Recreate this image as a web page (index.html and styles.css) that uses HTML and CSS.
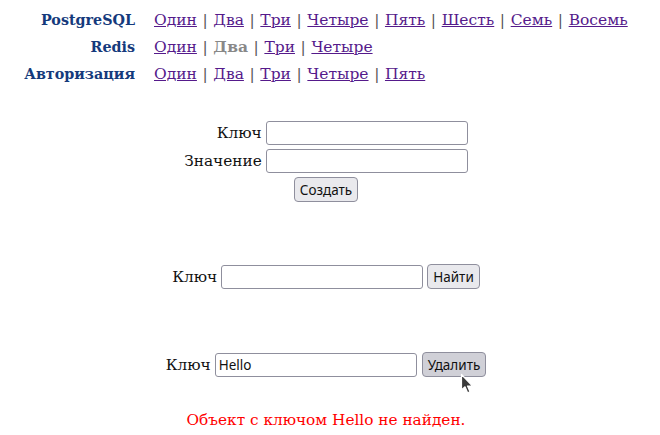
FILE: index.html
```html
<!DOCTYPE html>
<html lang="ru">
<head>
<meta charset="utf-8">
<title>Redis</title>
<link rel="stylesheet" href="styles.css">
</head>
<body>
<div class="page">
  <nav class="nav">
    <div class="nav-label">PostgreSQL</div>
    <div class="nav-links">
      <a href="#">Один</a><span class="sep">|</span><a href="#">Два</a><span class="sep">|</span><a href="#">Три</a><span class="sep">|</span><a href="#">Четыре</a><span class="sep">|</span><a href="#">Пять</a><span class="sep">|</span><a href="#">Шесть</a><span class="sep">|</span><a href="#">Семь</a><span class="sep">|</span><a href="#">Восемь</a>
    </div>
    <div class="nav-label">Redis</div>
    <div class="nav-links">
      <a href="#">Один</a><span class="sep">|</span><span class="current">Два</span><span class="sep">|</span><a href="#">Три</a><span class="sep">|</span><a href="#">Четыре</a>
    </div>
    <div class="nav-label">Авторизация</div>
    <div class="nav-links">
      <a href="#">Один</a><span class="sep">|</span><a href="#">Два</a><span class="sep">|</span><a href="#">Три</a><span class="sep">|</span><a href="#">Четыре</a><span class="sep">|</span><a href="#">Пять</a>
    </div>
  </nav>

  <form class="create">
    <label class="lbl">Ключ</label><input class="field" type="text">
    <label class="lbl">Значение</label><input class="field" type="text">
    <div class="create-btn"><button type="button" class="btn">Создать</button></div>
  </form>

  <form class="row find">
    <label class="lbl">Ключ</label><input class="field" type="text"><button type="button" class="btn">Найти</button>
  </form>

  <form class="row del">
    <label class="lbl">Ключ</label><input class="field" type="text" value="Hello"><span class="btn-wrap"><button type="button" class="btn hover">Удалить</button>
    <svg class="cursor" width="15" height="22" viewBox="0 0 15 22"><path d="M1.5 1.5 L1.5 17 L5 13.8 L7.6 19.8 L10 18.8 L7.5 13 L12.5 13 Z" fill="#3a3a3a" stroke="#fff" stroke-width="1.2" stroke-linejoin="round"/></svg></span>
  </form>

  <p class="error">Объект с ключом Hello не найден.</p>
</div>
</body>
</html>
```

FILE: styles.css
```css
html, body {
  margin: 0;
  padding: 0;
  background: #fff;
}
body {
  font-family: "DejaVu Serif", "Liberation Serif", serif;
  font-size: 15px;
  color: #111;
}
.page {
  width: 652px;
}
.nav {
  display: grid;
  grid-template-columns: 127px auto;
  column-gap: 19px;
  grid-auto-rows: 27px;
  align-items: center;
  padding: 6px 0 0 8px;
}
.nav-label {
  text-align: right;
  font-weight: bold;
  font-size: 14.3px;
  color: #153a7c;
}
.nav-links {
  font-size: 15.5px;
  white-space: nowrap;
}
.nav-links a {
  color: #551a8b;
  text-decoration: underline;
}
.sep {
  color: #555;
  margin: 0 5.6px;
}
.current {
  color: #888;
  font-weight: bold;
}
.create {
  display: grid;
  grid-template-columns: auto auto;
  justify-content: center;
  column-gap: 4px;
  row-gap: 4px;
  align-items: center;
  margin-top: 34px;
}
.lbl {
  text-align: right;
  font-size: 15.3px;
  color: #111;
}
.field {
  width: 194px;
  height: 22px;
  box-sizing: content-box;
  padding: 0 3px;
  margin: 0;
  border: 1px solid #8f8f9d;
  border-radius: 3px;
  font-family: "Noto Sans", "Open Sans", sans-serif;
  font-size: 13.5px;
  color: #111;
  background: #fff;
}
.create-btn {
  grid-column: 1 / span 2;
  display: flex;
  justify-content: center;
}
.btn {
  font-family: "Noto Sans", "Open Sans", sans-serif;
  font-size: 13.5px;
  color: #111;
  background: #e9e9ed;
  border: 1px solid #8f8f9d;
  border-radius: 4px;
  height: 25px;
  padding: 0 5px;
  margin: 0;
}
.btn.hover {
  background: #d0d0d7;
}
.row {
  display: flex;
  justify-content: center;
  align-items: center;
  gap: 4px;
}
.find {
  margin-top: 62px;
}
.del {
  margin-top: 63px;
}
.btn-wrap {
  position: relative;
  display: inline-flex;
  margin-left: 1px;
}
.cursor {
  position: absolute;
  left: 38px;
  top: 21px;
}
.error {
  margin: 34px 0 0;
  text-align: center;
  color: #ff0000;
  font-size: 15.3px;
}
```
